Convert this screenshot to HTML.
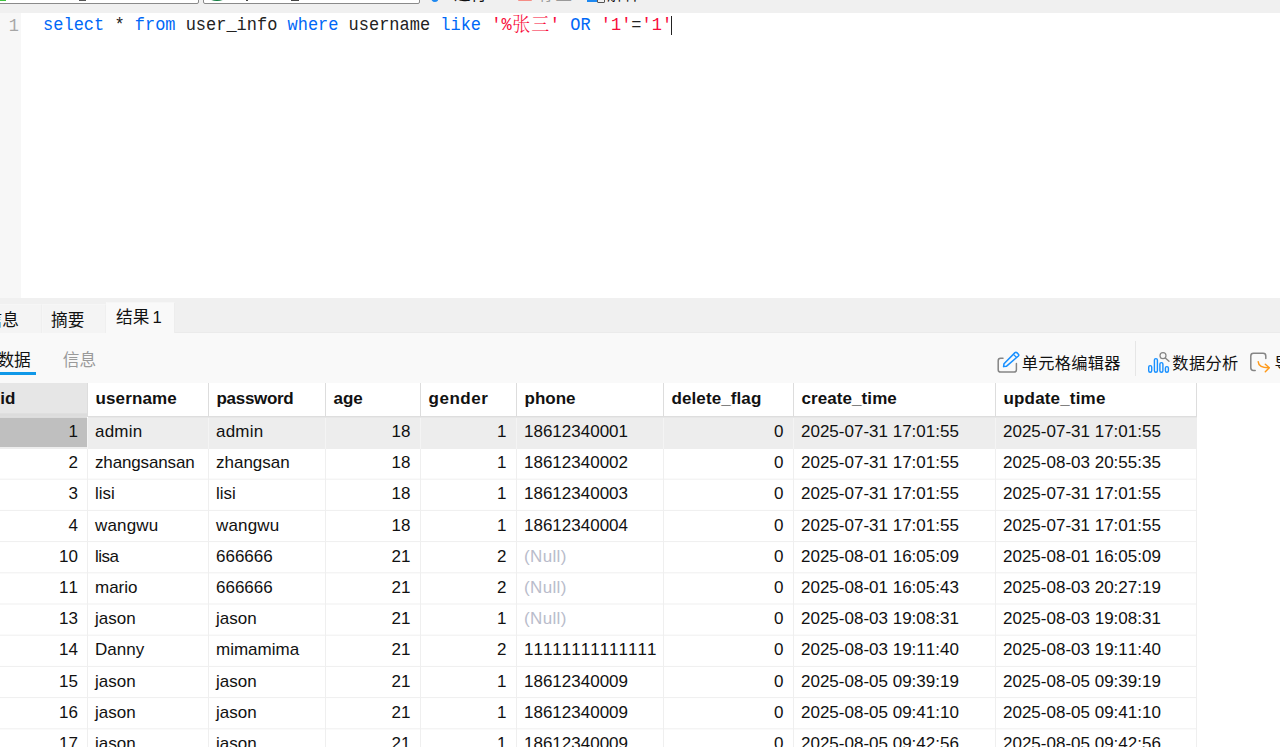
<!DOCTYPE html>
<html lang="zh-CN">
<head>
<meta charset="utf-8">
<title>Query</title>
<style>
*{box-sizing:border-box;margin:0;padding:0}
html,body{width:1280px;height:747px;overflow:hidden;background:#fff}
body{position:relative;font-family:"Liberation Sans","Noto Sans CJK SC",sans-serif;color:#111;font-size:17px}
.abs{position:absolute}
/* ---------- top toolbar (cropped) ---------- */
#topbar{left:0;top:0;width:1280px;height:13px;background:#f0f0f0;overflow:hidden}
.combo{position:absolute;top:-20px;height:24px;background:#fff;border:1px solid #8a8a8a;border-radius:0 0 2px 2px}
.tbtxt{position:absolute;top:-14.2px;font-size:16.5px;line-height:17px;white-space:nowrap;color:#111}
/* ---------- editor ---------- */
#editor{left:0;top:13px;width:1280px;height:285px;background:#fff}
#gutter{left:0;top:13px;width:21px;height:285px;background:#f7f7f7}
#lineno{left:1px;top:14.6px;width:21px;height:24px;line-height:24px;transform:scaleY(1.12);transform-origin:0 18px;font-family:"Liberation Mono","DejaVu Sans Mono",monospace;font-size:16.92px;color:#a6a6a6;text-align:right;padding-right:3px}
#code{left:43.1px;top:14px;height:24px;line-height:24px;transform:scaleY(1.12);transform-origin:0 18px;white-space:pre;font-family:"Liberation Mono","DejaVu Sans Mono","Noto Serif CJK SC",monospace;font-size:16.975px;color:#222}
.kw{color:#0068f7}
.str{color:#f80c3a}
.cj{display:inline-block;width:19.15px;text-align:center;font-family:"Noto Serif CJK SC","Noto Sans CJK SC",serif;font-weight:300;font-size:18px;line-height:0;vertical-align:baseline;position:relative;top:1.6px;transform:scaleY(0.935)}
#caret{left:671px;top:16px;width:1px;height:19px;background:#222}
/* ---------- result tabs ---------- */
#tabbar{left:0;top:298px;width:1280px;height:35px;background:#f0f0f0;border-bottom:1px solid #ebebeb}
.tab{position:absolute;top:6px;height:28.5px;background:#f4f4f4;border:1px solid #f6f6f6;border-right-color:#efefef;border-bottom:none;font-size:16.7px;line-height:31.4px;white-space:nowrap;color:#111}
.tab.on{top:4px;height:31px;background:#f9f9f9;border-color:#f9f9f9;border-right-color:#ededed;border-top-color:#f6f6f6;line-height:30.5px;word-spacing:-1.5px}
/* ---------- sub toolbar ---------- */
#subbar{left:0;top:333px;width:1280px;height:50px;background:#f9f9f9}
.st{position:absolute;font-size:16.7px;line-height:24px;white-space:nowrap}
#uline{left:0;top:372px;width:36px;height:3px;background:#1098e8}
.vsep{position:absolute;width:1px;background:#e6e6e6}
/* ---------- grid ---------- */
#grid{left:0;top:383px;width:1280px;height:364px;background:#fff;overflow:hidden;font-kerning:none}
.hrow{position:absolute;left:0;top:0;width:1197px;height:35px;background:#fff}
.hline{position:absolute;left:0;top:33px;width:1197px;height:1px;background:#dedede}
.hline2{position:absolute;left:88px;top:34px;width:1109px;height:1px;background:#e7e7e7}
.hc{position:absolute;top:0;height:33px;line-height:32px;padding-left:7.5px;font-weight:bold;font-size:17px;white-space:nowrap;color:#111}
.hc.hid{background:linear-gradient(#e6e6e6 0,#e6e6e6 29.5px,#dcdcdc 31px,#dcdcdc 100%);padding-left:0;height:35px}
.hc.hid span{margin-left:0.3px}
.hv{position:absolute;top:0;width:1px;height:34px;background:#dddddd}
.row{position:absolute;left:0;width:1197px;height:31px}
.selbg{position:absolute;left:0;top:35px;width:1197px;height:31px;background:#ededed}
.c{position:absolute;top:0;height:31px;line-height:29px;font-size:17px;white-space:nowrap;padding:0 8px 0 7px}
.c.r{text-align:right;padding-right:9.5px}
.c.null{color:#b9bccb}
.c.idc{padding-right:9px}
.sel .idc{width:87px}
.idbg{position:absolute;left:0;top:35px;width:87px;height:29px;background:#bfbfbf}
.lines{position:absolute;left:0;top:0}
</style>
</head>
<body>
<div id="topbar" class="abs">
  <div class="combo" style="left:-6px;width:205px"></div>
  <div class="combo" style="left:203px;width:217px"></div>
  <div class="abs" style="left:0;top:0;width:6px;height:1px;background:#3ec23e"></div>
  <div class="abs" style="left:209px;top:-12px;width:16px;height:13.4px;border-radius:0 0 8px 8px / 0 0 3px 3px;background:#0d7a3e"></div>
  <div class="abs" style="left:79px;top:0;width:7px;height:1px;background:#555"></div>
  <div class="abs" style="left:246px;top:0;width:2px;height:1px;background:#444"></div>
  <div class="abs" style="left:291px;top:0;width:8px;height:1px;background:#444"></div>
  <div class="abs" style="left:431px;top:-5px;width:8px;height:7px;border-radius:0 0 3px 6px;border-bottom:2px solid #1e88f0;border-right:2px solid #1e88f0;transform:skewX(-20deg)"></div>
  <span class="tbtxt" style="left:454px">运行</span>
  <div class="abs" style="left:518px;top:-13px;width:14px;height:14px;background:#f58d86;border-radius:1px"></div>
  <span class="tbtxt" style="left:539px;color:#9a9a9a">停止</span>
  <div class="abs" style="left:587px;top:-12px;width:12px;height:14px;background:#1e88f0"></div>
  <div class="abs" style="left:597px;top:-6px;width:8px;height:9px;border:1px solid #555;background:#f0f0f0;border-radius:1px"></div>
  <span class="tbtxt" style="left:607px">解释</span>
</div>
<div id="editor" class="abs"></div>
<div id="gutter" class="abs"></div>
<div id="lineno" class="abs">1</div>
<div id="code" class="abs"><span class="kw">select</span> * <span class="kw">from</span> user_info <span class="kw">where</span> username <span class="kw">like</span> <span class="str">'%<span class="cj">张</span><span class="cj">三</span>'</span> <span class="kw">OR</span> <span class="str">'1'</span>=<span class="str">'1'</span></div>
<div id="caret" class="abs"></div>

<div id="tabbar" class="abs">
  <div class="tab" style="left:-31px;width:73px;padding-left:15.5px">信息</div>
  <div class="tab" style="left:42px;width:64px;padding-left:8px">摘要</div>
  <div class="tab on" style="left:106px;width:69px;padding-left:9px">结果 1</div>
</div>
<div id="subbar" class="abs">
  <span class="st" style="left:-2.6px;top:16.2px;color:#111">数据</span>
  <span class="st" style="left:62.8px;top:16.2px;color:#9a9a9a">信息</span>
  <svg class="abs" style="left:994px;top:15.0px" width="30" height="28" viewBox="994 348 30 28" fill="none">
    <path d="M1003 358.3 H1000.6 Q998.2 358.3 998.2 360.7 V369.7 Q998.2 372.1 1000.6 372.1 H1014 Q1016.4 372.1 1016.4 369.7 V363.4" stroke="#858585" stroke-width="1.5" stroke-linecap="round"/>
    <path d="M1003.6 366.6 L1004 363.7 L1015 352.6 Q1015.9 351.8 1016.8 352.6 L1018.4 354.2 Q1019.2 355.1 1018.4 356 L1006.6 366.2 Z" stroke="#1890ff" stroke-width="1.55" stroke-linejoin="round"/>
    <path d="M1013.4 354.4 L1016.6 357.5" stroke="#1890ff" stroke-width="1.3"/>
  </svg>
  <span class="st" style="left:1021.8px;top:17.6px;font-size:16.2px;letter-spacing:0.3px">单元格编辑器</span>
  <div class="vsep" style="left:1135px;top:8.0px;height:35px"></div>
  <svg class="abs" style="left:1144px;top:15.0px" width="30" height="28" viewBox="1144 348 30 28" fill="none">
    <rect x="1148.7" y="365.6" width="3" height="6.6" rx="1.5" stroke="#1890ff" stroke-width="1.4"/>
    <rect x="1154.4" y="358.6" width="3" height="13.6" rx="1.5" stroke="#1890ff" stroke-width="1.4"/>
    <rect x="1159.9" y="362.6" width="3" height="9.6" rx="1.5" stroke="#1890ff" stroke-width="1.4"/>
    <rect x="1165.4" y="366.6" width="3" height="5.6" rx="1.5" stroke="#1890ff" stroke-width="1.4"/>
    <circle cx="1163" cy="355.7" r="3" stroke="#858585" stroke-width="1.2"/>
    <path d="M1165.3 358 L1169 361.2" stroke="#858585" stroke-width="1.4" stroke-linecap="round"/>
  </svg>
  <span class="st" style="left:1172.3px;top:17.6px;font-size:16.2px;letter-spacing:0.4px">数据分析</span>
  <svg class="abs" style="left:1246px;top:15.0px" width="30" height="28" viewBox="1246 348 30 28" fill="none">
    <path d="M1265.8 358.4 V356 Q1265.8 353.3 1263.1 353.3 H1253.5 Q1250.8 353.3 1250.8 356 V367.7 Q1250.8 370.4 1253.5 370.4 H1255.2" stroke="#858585" stroke-width="1.5" stroke-linecap="round"/>
    <path d="M1258.2 361.7 Q1258.6 367.6 1268.6 367.8" stroke="#ff9a1a" stroke-width="1.5" stroke-linecap="round"/>
    <path d="M1265.3 364.2 L1269.3 367.8 L1265.3 371.8" stroke="#ff9a1a" stroke-width="1.5" stroke-linecap="round" stroke-linejoin="round"/>
  </svg>
  <span class="st" style="left:1274.5px;top:17.6px;font-size:16.2px;letter-spacing:0.4px">导出</span>
</div>
<div id="uline" class="abs"></div>

<div id="grid" class="abs">
<div class="hrow">
<div class="hc hid" style="left:0px;width:87px"><span>id</span></div>
<div class="hc" style="left:88px;width:120px"><span style="letter-spacing:0.12px">username</span></div>
<div class="hc" style="left:209px;width:116px"><span style="letter-spacing:-0.3px">password</span></div>
<div class="hc" style="left:326px;width:94px"><span>age</span></div>
<div class="hc" style="left:421px;width:95px"><span style="letter-spacing:0.55px">gender</span></div>
<div class="hc" style="left:517px;width:146px"><span>phone</span></div>
<div class="hc" style="left:664px;width:129px"><span style="letter-spacing:0.1px">delete_flag</span></div>
<div class="hc" style="left:794px;width:201px"><span style="letter-spacing:0.08px">create_time</span></div>
<div class="hc" style="left:996px;width:200px"><span style="letter-spacing:0.17px">update_time</span></div>
<div class="hline"></div><div class="hline2"></div>
<div class="hv" style="left:87px"></div>
<div class="hv" style="left:208px"></div>
<div class="hv" style="left:325px"></div>
<div class="hv" style="left:420px"></div>
<div class="hv" style="left:516px"></div>
<div class="hv" style="left:663px"></div>
<div class="hv" style="left:793px"></div>
<div class="hv" style="left:995px"></div>
<div class="hv" style="left:1196px"></div>
</div>
<div class="selbg"></div><div class="idbg"></div>
<div class="row sel" style="top:34px">
<div class="c r idc" style="left:0px;width:87px"><span>1</span></div>
<div class="c l" style="left:88px;width:120px"><span style="letter-spacing:0.2px">admin</span></div>
<div class="c l" style="left:209px;width:116px"><span style="letter-spacing:0.2px">admin</span></div>
<div class="c r" style="left:326px;width:94px"><span>18</span></div>
<div class="c r" style="left:421px;width:95px"><span>1</span></div>
<div class="c l" style="left:517px;width:146px"><span>18612340001</span></div>
<div class="c r" style="left:664px;width:129px"><span>0</span></div>
<div class="c l" style="left:794px;width:201px"><span>2025-07-31 17:01:55</span></div>
<div class="c l" style="left:996px;width:200px"><span>2025-07-31 17:01:55</span></div>
</div>
<div class="row" style="top:65px">
<div class="c r idc" style="left:0px;width:87px"><span>2</span></div>
<div class="c l" style="left:88px;width:120px"><span style="letter-spacing:-0.14px">zhangsansan</span></div>
<div class="c l" style="left:209px;width:116px"><span>zhangsan</span></div>
<div class="c r" style="left:326px;width:94px"><span>18</span></div>
<div class="c r" style="left:421px;width:95px"><span>1</span></div>
<div class="c l" style="left:517px;width:146px"><span>18612340002</span></div>
<div class="c r" style="left:664px;width:129px"><span>0</span></div>
<div class="c l" style="left:794px;width:201px"><span>2025-07-31 17:01:55</span></div>
<div class="c l" style="left:996px;width:200px"><span>2025-08-03 20:55:35</span></div>
</div>
<div class="row" style="top:96px">
<div class="c r idc" style="left:0px;width:87px"><span>3</span></div>
<div class="c l" style="left:88px;width:120px"><span>lisi</span></div>
<div class="c l" style="left:209px;width:116px"><span>lisi</span></div>
<div class="c r" style="left:326px;width:94px"><span>18</span></div>
<div class="c r" style="left:421px;width:95px"><span>1</span></div>
<div class="c l" style="left:517px;width:146px"><span>18612340003</span></div>
<div class="c r" style="left:664px;width:129px"><span>0</span></div>
<div class="c l" style="left:794px;width:201px"><span>2025-07-31 17:01:55</span></div>
<div class="c l" style="left:996px;width:200px"><span>2025-07-31 17:01:55</span></div>
</div>
<div class="row" style="top:128px">
<div class="c r idc" style="left:0px;width:87px"><span>4</span></div>
<div class="c l" style="left:88px;width:120px"><span style="letter-spacing:0.17px">wangwu</span></div>
<div class="c l" style="left:209px;width:116px"><span style="letter-spacing:0.17px">wangwu</span></div>
<div class="c r" style="left:326px;width:94px"><span>18</span></div>
<div class="c r" style="left:421px;width:95px"><span>1</span></div>
<div class="c l" style="left:517px;width:146px"><span>18612340004</span></div>
<div class="c r" style="left:664px;width:129px"><span>0</span></div>
<div class="c l" style="left:794px;width:201px"><span>2025-07-31 17:01:55</span></div>
<div class="c l" style="left:996px;width:200px"><span>2025-07-31 17:01:55</span></div>
</div>
<div class="row" style="top:159px">
<div class="c r idc" style="left:0px;width:87px"><span>10</span></div>
<div class="c l" style="left:88px;width:120px"><span style="letter-spacing:-0.5px">lisa</span></div>
<div class="c l" style="left:209px;width:116px"><span>666666</span></div>
<div class="c r" style="left:326px;width:94px"><span>21</span></div>
<div class="c r" style="left:421px;width:95px"><span>2</span></div>
<div class="c l null" style="left:517px;width:146px"><span style="letter-spacing:0.35px">(Null)</span></div>
<div class="c r" style="left:664px;width:129px"><span>0</span></div>
<div class="c l" style="left:794px;width:201px"><span>2025-08-01 16:05:09</span></div>
<div class="c l" style="left:996px;width:200px"><span>2025-08-01 16:05:09</span></div>
</div>
<div class="row" style="top:190px">
<div class="c r idc" style="left:0px;width:87px"><span>11</span></div>
<div class="c l" style="left:88px;width:120px"><span>mario</span></div>
<div class="c l" style="left:209px;width:116px"><span>666666</span></div>
<div class="c r" style="left:326px;width:94px"><span>21</span></div>
<div class="c r" style="left:421px;width:95px"><span>2</span></div>
<div class="c l null" style="left:517px;width:146px"><span style="letter-spacing:0.35px">(Null)</span></div>
<div class="c r" style="left:664px;width:129px"><span>0</span></div>
<div class="c l" style="left:794px;width:201px"><span>2025-08-01 16:05:43</span></div>
<div class="c l" style="left:996px;width:200px"><span>2025-08-03 20:27:19</span></div>
</div>
<div class="row" style="top:221px">
<div class="c r idc" style="left:0px;width:87px"><span>13</span></div>
<div class="c l" style="left:88px;width:120px"><span>jason</span></div>
<div class="c l" style="left:209px;width:116px"><span>jason</span></div>
<div class="c r" style="left:326px;width:94px"><span>21</span></div>
<div class="c r" style="left:421px;width:95px"><span>1</span></div>
<div class="c l null" style="left:517px;width:146px"><span style="letter-spacing:0.35px">(Null)</span></div>
<div class="c r" style="left:664px;width:129px"><span>0</span></div>
<div class="c l" style="left:794px;width:201px"><span>2025-08-03 19:08:31</span></div>
<div class="c l" style="left:996px;width:200px"><span>2025-08-03 19:08:31</span></div>
</div>
<div class="row" style="top:252px">
<div class="c r idc" style="left:0px;width:87px"><span>14</span></div>
<div class="c l" style="left:88px;width:120px"><span>Danny</span></div>
<div class="c l" style="left:209px;width:116px"><span>mimamima</span></div>
<div class="c r" style="left:326px;width:94px"><span>21</span></div>
<div class="c r" style="left:421px;width:95px"><span>2</span></div>
<div class="c l" style="left:517px;width:146px"><span>11111111111111</span></div>
<div class="c r" style="left:664px;width:129px"><span>0</span></div>
<div class="c l" style="left:794px;width:201px"><span>2025-08-03 19:11:40</span></div>
<div class="c l" style="left:996px;width:200px"><span>2025-08-03 19:11:40</span></div>
</div>
<div class="row" style="top:284px">
<div class="c r idc" style="left:0px;width:87px"><span>15</span></div>
<div class="c l" style="left:88px;width:120px"><span>jason</span></div>
<div class="c l" style="left:209px;width:116px"><span>jason</span></div>
<div class="c r" style="left:326px;width:94px"><span>21</span></div>
<div class="c r" style="left:421px;width:95px"><span>1</span></div>
<div class="c l" style="left:517px;width:146px"><span>18612340009</span></div>
<div class="c r" style="left:664px;width:129px"><span>0</span></div>
<div class="c l" style="left:794px;width:201px"><span>2025-08-05 09:39:19</span></div>
<div class="c l" style="left:996px;width:200px"><span>2025-08-05 09:39:19</span></div>
</div>
<div class="row" style="top:315px">
<div class="c r idc" style="left:0px;width:87px"><span>16</span></div>
<div class="c l" style="left:88px;width:120px"><span>jason</span></div>
<div class="c l" style="left:209px;width:116px"><span>jason</span></div>
<div class="c r" style="left:326px;width:94px"><span>21</span></div>
<div class="c r" style="left:421px;width:95px"><span>1</span></div>
<div class="c l" style="left:517px;width:146px"><span>18612340009</span></div>
<div class="c r" style="left:664px;width:129px"><span>0</span></div>
<div class="c l" style="left:794px;width:201px"><span>2025-08-05 09:41:10</span></div>
<div class="c l" style="left:996px;width:200px"><span>2025-08-05 09:41:10</span></div>
</div>
<div class="row" style="top:346px">
<div class="c r idc" style="left:0px;width:87px"><span>17</span></div>
<div class="c l" style="left:88px;width:120px"><span>jason</span></div>
<div class="c l" style="left:209px;width:116px"><span>jason</span></div>
<div class="c r" style="left:326px;width:94px"><span>21</span></div>
<div class="c r" style="left:421px;width:95px"><span>1</span></div>
<div class="c l" style="left:517px;width:146px"><span>18612340009</span></div>
<div class="c r" style="left:664px;width:129px"><span>0</span></div>
<div class="c l" style="left:794px;width:201px"><span>2025-08-05 09:42:56</span></div>
<div class="c l" style="left:996px;width:200px"><span>2025-08-05 09:42:56</span></div>
</div>
<svg class="lines" width="1197" height="364" viewBox="0 383 1197 364"><rect x="0" y="478.70" width="1197" height="1" fill="#efefef"/><rect x="0" y="509.90" width="1197" height="1" fill="#efefef"/><rect x="0" y="541.10" width="1197" height="1" fill="#efefef"/><rect x="0" y="572.30" width="1197" height="1" fill="#efefef"/><rect x="0" y="603.50" width="1197" height="1" fill="#efefef"/><rect x="0" y="634.70" width="1197" height="1" fill="#efefef"/><rect x="0" y="665.90" width="1197" height="1" fill="#efefef"/><rect x="0" y="697.10" width="1197" height="1" fill="#efefef"/><rect x="0" y="728.30" width="1197" height="1" fill="#efefef"/><rect x="87" y="449" width="1" height="298" fill="#efefef"/><rect x="208" y="449" width="1" height="298" fill="#efefef"/><rect x="325" y="449" width="1" height="298" fill="#efefef"/><rect x="420" y="449" width="1" height="298" fill="#efefef"/><rect x="516" y="449" width="1" height="298" fill="#efefef"/><rect x="663" y="449" width="1" height="298" fill="#efefef"/><rect x="793" y="449" width="1" height="298" fill="#efefef"/><rect x="995" y="449" width="1" height="298" fill="#efefef"/><rect x="1196" y="449" width="1" height="298" fill="#efefef"/><rect x="87" y="418" width="1" height="31" fill="#f4f4f4"/><rect x="208" y="418" width="1" height="31" fill="#f4f4f4"/><rect x="325" y="418" width="1" height="31" fill="#f4f4f4"/><rect x="420" y="418" width="1" height="31" fill="#f4f4f4"/><rect x="516" y="418" width="1" height="31" fill="#f4f4f4"/><rect x="663" y="418" width="1" height="31" fill="#f4f4f4"/><rect x="793" y="418" width="1" height="31" fill="#f4f4f4"/><rect x="995" y="418" width="1" height="31" fill="#f4f4f4"/></svg>
</div>
</body>
</html>
